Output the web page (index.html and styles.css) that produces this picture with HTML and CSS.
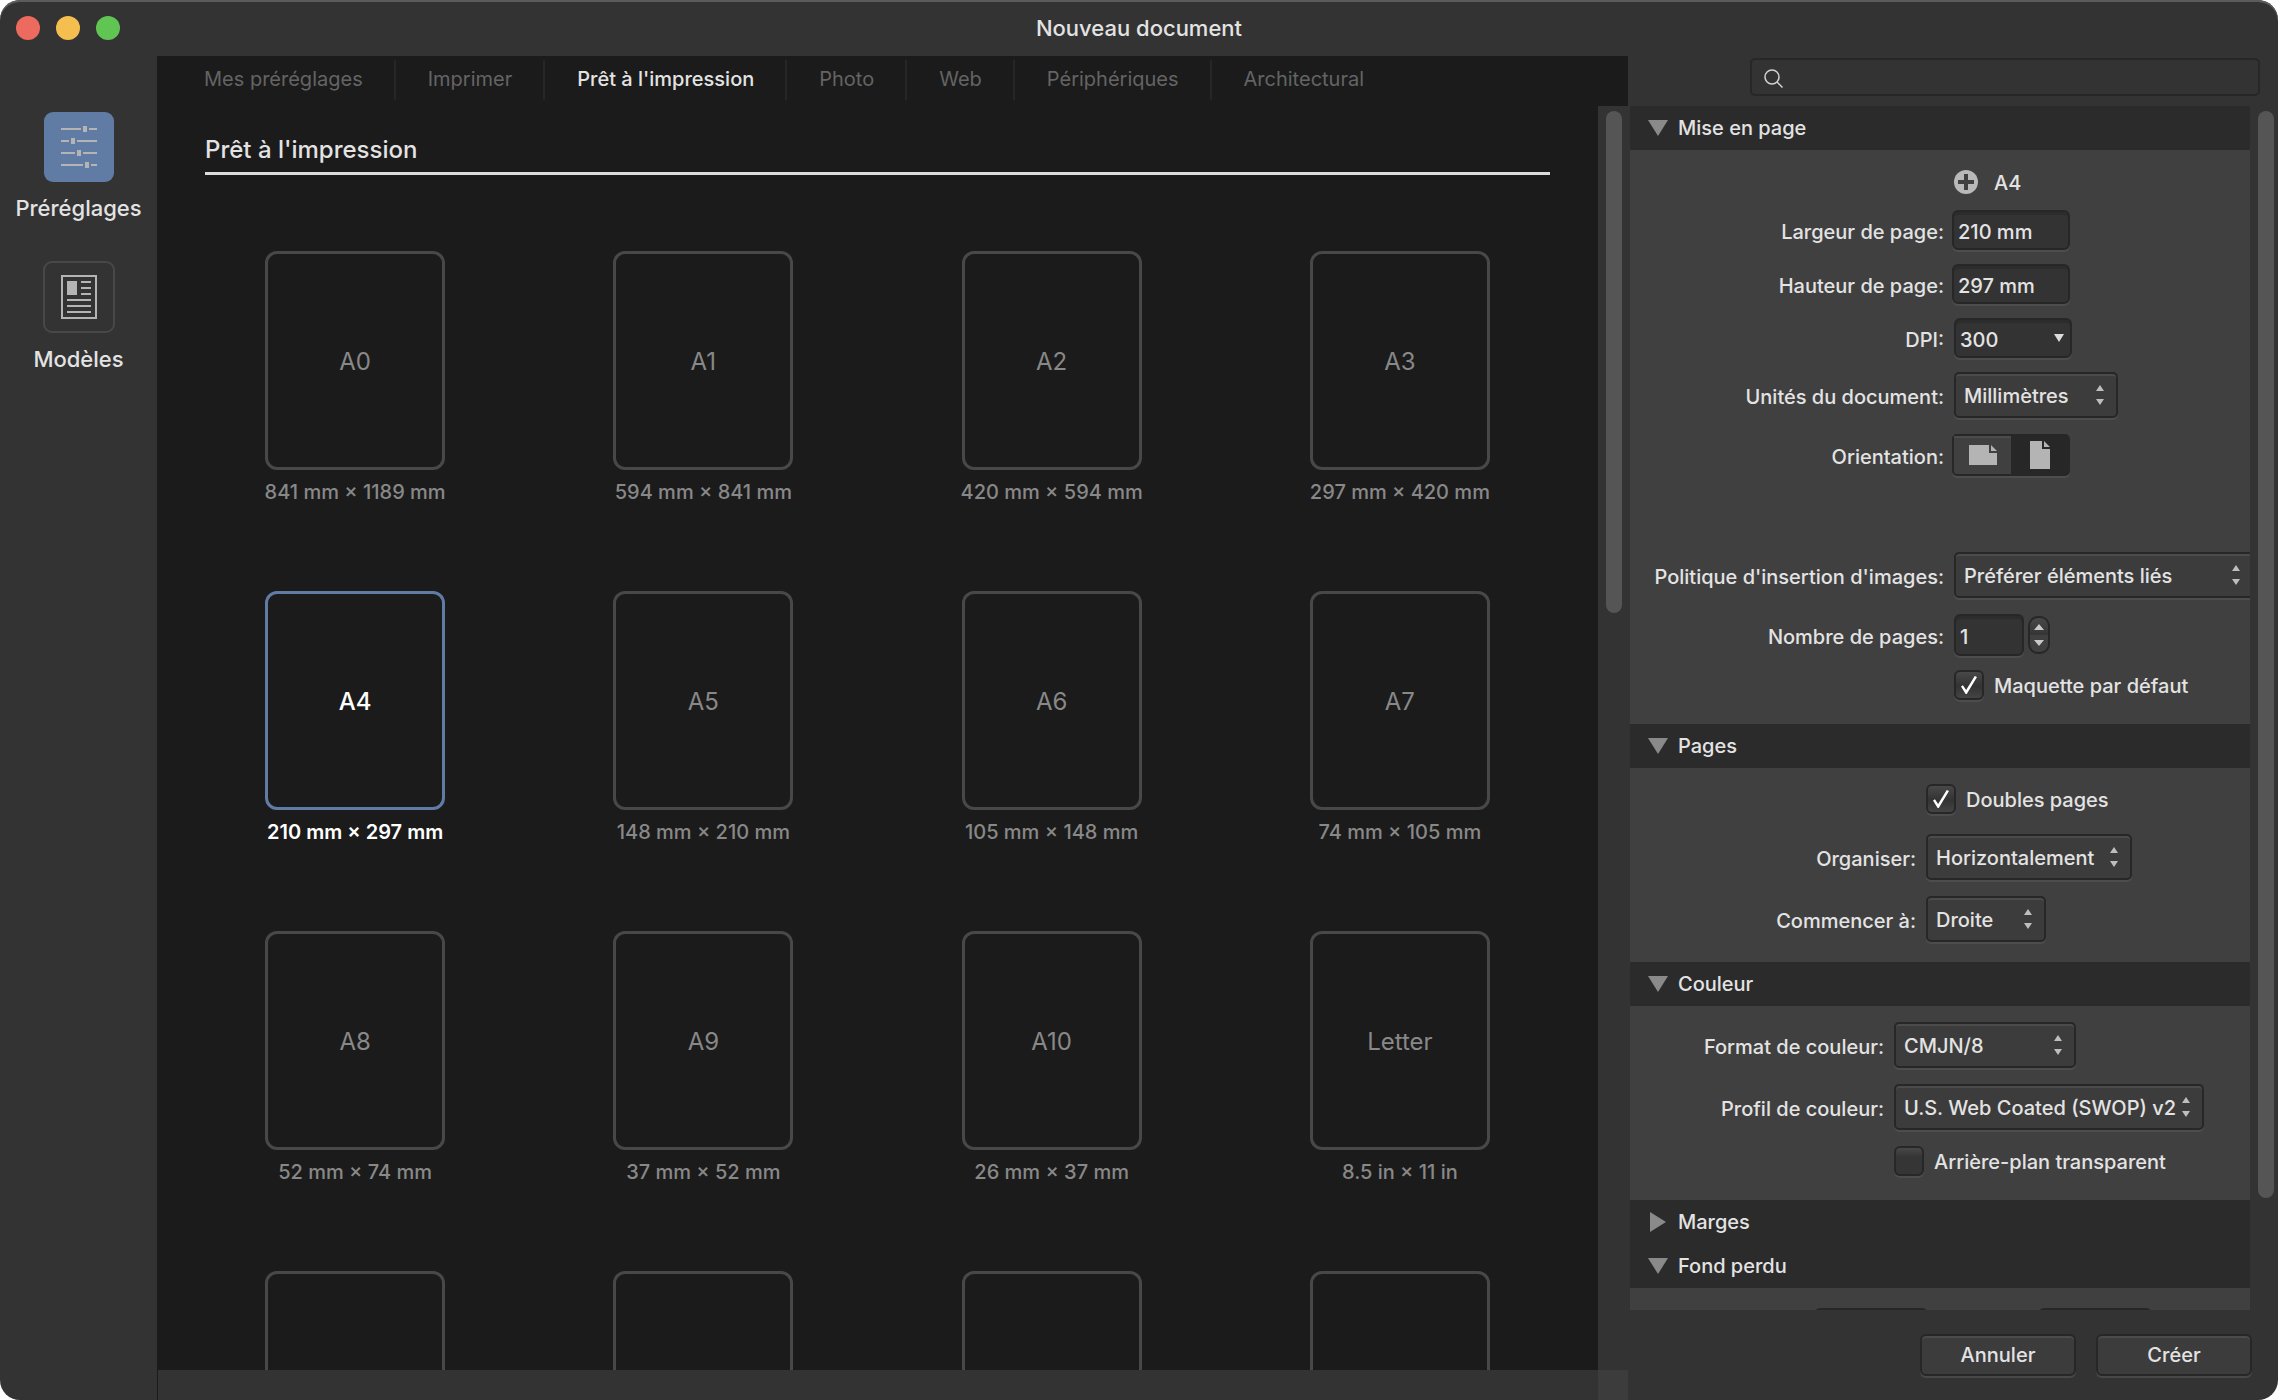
FILE: index.html
```html
<!DOCTYPE html>
<html lang="fr">
<head>
<meta charset="utf-8">
<meta name="viewport" content="width=device-width, initial-scale=1">
<title>Nouveau document</title>
<link rel="stylesheet" href="styles.css">
</head>
<body>
<svg class="defs" aria-hidden="true">
  <symbol id="updown" viewBox="0 0 8 20"><path d="M4 0 8 6H0ZM4 20 8 14H0Z"/></symbol>
  <symbol id="open" viewBox="0 0 20 16"><path d="M0 0H20L10 16Z"/></symbol>
  <symbol id="closed" viewBox="0 0 16 20"><path d="M0 0V20L16 10Z"/></symbol>
</svg>
<div class="window">
  <header class="titlebar">
    <div class="lights">
      <button class="light light-close" aria-label="Fermer"></button>
      <button class="light light-min" aria-label="Réduire"></button>
      <button class="light light-zoom" aria-label="Agrandir"></button>
    </div>
    <h1 class="title">Nouveau document</h1>
  </header>
  <div class="content">
    <nav class="side">
      <button class="side-item">
        <span class="side-icon side-icon-active">
          <svg width="36" height="42" viewBox="0 0 36 42" fill="#b4b4b4"><path d="M0 2h20v2H0zM22 0h4v6h-4zM28 2h8v2h-8zM0 14h8v2H0zM10 12h4v6h-4zM16 14h20v2H16zM0 26h14v2H0zM16 24h4v6h-4zM22 26h14v2H22zM0 38h22v2H0zM24 36h4v6h-4zM30 38h6v2h-6z"/></svg>
        </span>
        <span>Préréglages</span>
      </button>
      <button class="side-item">
        <span class="side-icon">
          <svg width="36" height="44" viewBox="0 0 36 44" fill="#b4b4b4"><path fill-rule="evenodd" d="M0 0h36v44H0zM2 2v40h32V2z"/><path d="M6 6h10v14H6zM20 6h10v2H20zM20 12h10v2H20zM20 18h10v2H20zM6 24h24v2H6zM6 30h24v2H6zM6 36h24v2H6z"/></svg>
        </span>
        <span>Modèles</span>
      </button>
    </nav>
    <main class="main">
      <div class="tabs" role="tablist">
        <button class="tab" role="tab">Mes préréglages</button>
        <button class="tab" role="tab">Imprimer</button>
        <button class="tab tab-active" role="tab" aria-selected="true">Prêt à l'impression</button>
        <button class="tab" role="tab">Photo</button>
        <button class="tab" role="tab">Web</button>
        <button class="tab" role="tab">Périphériques</button>
        <button class="tab" role="tab">Architectural</button>
      </div>
      <div class="browser">
        <div class="list">
          <h2 class="list-title">Prêt à l'impression</h2>
          <div class="grid">
            <button class="preset"><span class="sheet">A0</span><span>841 mm × 1189 mm</span></button>
            <button class="preset"><span class="sheet">A1</span><span>594 mm × 841 mm</span></button>
            <button class="preset"><span class="sheet">A2</span><span>420 mm × 594 mm</span></button>
            <button class="preset"><span class="sheet">A3</span><span>297 mm × 420 mm</span></button>
            <button class="preset preset-active"><span class="sheet">A4</span><span>210 mm × 297 mm</span></button>
            <button class="preset"><span class="sheet">A5</span><span>148 mm × 210 mm</span></button>
            <button class="preset"><span class="sheet">A6</span><span>105 mm × 148 mm</span></button>
            <button class="preset"><span class="sheet">A7</span><span>74 mm × 105 mm</span></button>
            <button class="preset"><span class="sheet">A8</span><span>52 mm × 74 mm</span></button>
            <button class="preset"><span class="sheet">A9</span><span>37 mm × 52 mm</span></button>
            <button class="preset"><span class="sheet">A10</span><span>26 mm × 37 mm</span></button>
            <button class="preset"><span class="sheet">Letter</span><span>8.5 in × 11 in</span></button>
            <button class="preset" aria-label="Préréglage 13"><span class="sheet"></span></button>
            <button class="preset" aria-label="Préréglage 14"><span class="sheet"></span></button>
            <button class="preset" aria-label="Préréglage 15"><span class="sheet"></span></button>
            <button class="preset" aria-label="Préréglage 16"><span class="sheet"></span></button>
          </div>
        </div>
        <div class="track"><div class="thumb thumb-list"></div></div>
      </div>
      <div class="hbar"><div class="corner"></div></div>
    </main>
    <aside class="panel">
      <div class="search">
        <svg width="19" height="19" viewBox="0 0 19 19" fill="none" stroke="#d2d2d2" stroke-width="1.5"><circle cx="8" cy="8" r="7"/><path d="M13 13 18.500 18.500"/></svg>
        <input class="search-input" type="search" aria-label="Rechercher">
      </div>
      <div class="settings">
        <form class="sections" id="settings">
          <section>
            <h3 class="head"><svg class="tri" width="20" height="16"><use href="#open"/></svg>Mise en page</h3>
            <div class="body body-layout">
              <div class="row row-name">
                <span></span>
                <span class="check">
                  <button type="button" class="add" aria-label="Ajouter un préréglage"><svg width="24" height="24" viewBox="0 0 24 24"><circle cx="12" cy="12" r="12" fill="#b9b9b9"/><path d="M12 4v16M4 12h16" stroke="#404040" stroke-width="4"/></svg></button>
                  <span>A4</span>
                </span>
              </div>
              <div class="row row-near"><label for="w">Largeur de page:</label><input class="field" id="w" value="210 mm"></div>
              <div class="row row-near"><label for="h">Hauteur de page:</label><input class="field" id="h" value="297 mm"></div>
              <div class="row"><label for="dpi">DPI:</label><span class="pick"><select class="field" id="dpi"><option>300</option></select><svg class="drop" width="10" height="8" viewBox="0 0 10 8"><path d="M0 0H10L5 8Z"/></svg></span></div>
              <div class="row row-wide"><label for="unit">Unités du document:</label><span class="pick"><select class="select w-unit" id="unit"><option>Millimètres</option></select><svg class="arrows" width="8" height="20"><use href="#updown"/></svg></span></div>
              <div class="row row-near row-orient"><span id="orient">Orientation:</span>
                <span class="segments" role="group" aria-labelledby="orient">
                  <button type="button" class="segment" aria-label="Paysage"><svg width="28" height="20" viewBox="0 0 28 20" fill="#b4b4b4"><path d="M0 0H20V8H28V20H0ZM22 0 28 6H22Z"/></svg></button>
                  <button type="button" class="segment segment-on" aria-label="Portrait" aria-pressed="true"><svg width="20" height="28" viewBox="0 0 20 28" fill="#b4b4b4"><path d="M0 0H12V8H20V28H0ZM14 0 20 6H14Z"/></svg></button>
                </span>
              </div>
              <div class="row row-wide"><label for="policy">Politique d'insertion d'images:</label><span class="pick"><select class="select w-policy" id="policy"><option>Préférer éléments liés</option></select><svg class="arrows" width="8" height="20"><use href="#updown"/></svg></span></div>
              <div class="row"><label for="count">Nombre de pages:</label>
                <span class="count"><input class="field field-count" id="count" value="1"><button type="button" class="stepper" aria-label="Modifier le nombre de pages"><svg width="10" height="22" viewBox="0 0 10 22" fill="#c8c8c8"><path d="M5 0 10 6H0ZM5 22 10 16H0Z"/></svg></button></span>
              </div>
              <div class="row"><span></span><label class="check"><input class="box" type="checkbox" checked><span>Maquette par défaut</span></label></div>
            </div>
          </section>
          <section>
            <h3 class="head"><svg class="tri" width="20" height="16"><use href="#open"/></svg>Pages</h3>
            <div class="body body-pages">
              <div class="row row-spread"><span></span><label class="check"><input class="box" type="checkbox" checked><span>Doubles pages</span></label></div>
              <div class="row row-wide"><label for="arrange">Organiser:</label><span class="pick"><select class="select w-arrange" id="arrange"><option>Horizontalement</option></select><svg class="arrows" width="8" height="20"><use href="#updown"/></svg></span></div>
              <div class="row row-wide"><label for="start">Commencer à:</label><span class="pick"><select class="select w-start" id="start"><option>Droite</option></select><svg class="arrows" width="8" height="20"><use href="#updown"/></svg></span></div>
            </div>
          </section>
          <section>
            <h3 class="head"><svg class="tri" width="20" height="16"><use href="#open"/></svg>Couleur</h3>
            <div class="body body-color">
              <div class="row row-wide"><label for="format">Format de couleur:</label><span class="pick"><select class="select w-format" id="format"><option>CMJN/8</option></select><svg class="arrows" width="8" height="20"><use href="#updown"/></svg></span></div>
              <div class="row row-wide"><label for="profile">Profil de couleur:</label><span class="pick"><select class="select w-profile" id="profile"><option>U.S. Web Coated (SWOP) v2</option></select><svg class="arrows" width="8" height="20"><use href="#updown"/></svg></span></div>
              <div class="row"><span></span><label class="check"><input class="box" type="checkbox"><span>Arrière-plan transparent</span></label></div>
            </div>
          </section>
          <section>
            <h3 class="head"><svg class="tri" width="16" height="20"><use href="#closed"/></svg>Marges</h3>
          </section>
          <section>
            <h3 class="head"><svg class="tri" width="20" height="16"><use href="#open"/></svg>Fond perdu</h3>
            <div class="body body-bleed">
              <input class="field" aria-label="Fond perdu gauche">
              <input class="field" aria-label="Fond perdu droite">
            </div>
          </section>
        </form>
        <div class="track track-panel"><div class="thumb thumb-panel"></div></div>
      </div>
      <footer class="actions">
        <button class="action">Annuler</button>
        <button class="action">Créer</button>
      </footer>
    </aside>
  </div>
</div>
</body>
</html>
```
FILE: styles.css
```css
* { box-sizing: border-box; }

body {
  margin: 0;
  background: #fff;
  color: #e3e3e3;
  font: 400 20px/24px Inter, "Liberation Sans", sans-serif;
}

button, input, select {
  margin: 0;
  padding: 0;
  border: 0;
  background: none;
  color: inherit;
  font: inherit;
}

h1, h2, h3 { margin: 0; font: inherit; }

svg { flex: none; }

.defs { display: none; }

.window {
  display: flex;
  flex-direction: column;
  height: 100vh;
  overflow: hidden;
  border-radius: 20px;
  background: #333;
  box-shadow: inset 0 2px #5c5c5c;
}

/* title bar */
.titlebar {
  display: grid;
  grid-template-columns: 1fr auto 1fr;
  align-items: center;
  flex: none;
  height: 56px;
  padding: 0 16px;
}
.lights { display: flex; gap: 16px; }
.light { width: 24px; height: 24px; border-radius: 50%; }
.light-close { background: #ec6a5e; }
.light-min { background: #f4bf4f; }
.light-zoom { background: #61c554; }
.title { font-size: 22px; font-weight: 500; }

.content { display: flex; flex: 1; min-height: 0; }

/* left navigation */
.side {
  display: flex;
  flex-direction: column;
  gap: 39px;
  flex: none;
  width: 157px;
  padding-top: 56px;
}
.side-item {
  display: flex;
  flex-direction: column;
  align-items: center;
  gap: 12px;
  font-size: 22px;
  line-height: 28px;
  font-weight: 500;
}
.side-icon {
  display: grid;
  place-items: center;
  width: 72px;
  height: 72px;
  border: 2px solid #484848;
  border-radius: 9px;
}
.side-icon-active { width: 70px; height: 70px; border: 0; background: #617ca4; }

/* preset browser */
.main {
  display: flex;
  flex-direction: column;
  flex: 1;
  min-width: 0;
  background: #1b1b1b;
}
.tabs { display: flex; flex: none; height: 50px; padding: 4px 0 6px 15px; }
.tab {
  padding: 0 31px 2px 32px;
  border-right: 2px solid #262626;
  color: #646464;
  white-space: nowrap;
}
.tab:last-child { border-right: 0; }
.tab-active { color: #e3e3e3; font-weight: 500; }

.browser { display: flex; flex: 1; min-height: 0; }
.list { flex: 1; min-width: 0; overflow: hidden; }
.list-title {
  margin: 0 48px;
  padding: 29px 0 7px;
  border-bottom: 3px solid #dcdcdc;
  font-size: 24px;
  line-height: 30px;
  font-weight: 500;
}
.grid {
  display: grid;
  grid-template-columns: repeat(4, 1fr);
  grid-auto-rows: 340px;
  padding: 76px 24px 0;
}
.preset {
  display: flex;
  flex-direction: column;
  align-items: center;
  gap: 10px;
  color: #888;
  font-weight: 500;
}
.sheet {
  display: grid;
  place-items: center;
  width: 180px;
  height: 219px;
  padding-top: 2px;
  border: 3px solid #484848;
  border-radius: 12px;
  font-size: 24px;
  font-weight: 400;
}
.preset-active { color: #fff; font-weight: 600; }
.preset-active .sheet { border-color: #617ca4; font-weight: 500; }

.track { flex: none; width: 30px; padding: 5px 6px 5px 8px; background: #333; }
.thumb { width: 16px; border-radius: 8px; background: #555; }
.thumb-list { height: 40%; }
.hbar {
  display: flex;
  justify-content: flex-end;
  flex: none;
  height: 30px;
  margin-left: 1px;
  background: #333;
}
.corner { width: 30px; background: #3c3c3c; }

/* settings panel */
.panel { display: flex; flex-direction: column; flex: none; width: 650px; }
.search {
  display: flex;
  align-items: center;
  gap: 12px;
  flex: none;
  height: 38px;
  margin: 2px 18px 10px 122px;
  padding: 2px 12px 0;
  border: 2px solid #272727;
  border-radius: 5px;
}
.search-input { flex: 1; min-width: 0; outline: 0; }
.settings { display: flex; flex: 1; min-height: 0; padding-left: 2px; }
.sections { flex: 1; min-width: 0; overflow: hidden; font-weight: 500; }
.track-panel { width: 28px; }
.thumb-panel { height: 91%; }

.head {
  display: flex;
  align-items: center;
  gap: 10px;
  height: 44px;
  padding-left: 18px;
  background: #2b2b2b;
  font-weight: 500;
}
.tri { box-sizing: content-box; fill: #8a8a8a; }
.tri[width="16"] { padding: 0 2px; }

.body { padding: 16px 0 24px; background: #404040; }
.row {
  display: grid;
  grid-template-columns: 314px auto;
  justify-content: start;
  align-items: center;
  column-gap: 10px;
  margin-bottom: 14px;
  white-space: nowrap;
}
.row > :first-child { padding-top: 3px; text-align: right; }
.row:last-child { margin-bottom: 0; }
.row-near { column-gap: 8px; }
.row-name { height: 32px; margin-bottom: 12px; }
.row-wide { margin-bottom: 16px; }
.row-orient { margin-bottom: 76px; }
.row-spread { margin-bottom: 20px; }
.body-pages { padding-bottom: 20px; }
.body-pages .row { grid-template-columns: 286px auto; }
.body-color .row { grid-template-columns: 254px auto; }
.body-bleed { display: flex; gap: 110px; padding: 20px 0 0 184px; }

.check { display: flex; align-items: center; gap: 10px; }
.check > span { padding-top: 2px; }
.add { display: grid; place-items: center; width: 30px; height: 24px; padding-right: 6px; }
.box {
  display: grid;
  place-items: center;
  appearance: none;
  width: 30px;
  height: 30px;
  border: 2px solid #272727;
  border-radius: 6px;
  background: linear-gradient(#484848, #353535 35%);
  box-shadow: 0 2px #4d4d4d;
}
.box:checked { background: linear-gradient(#484848, #333 55%, #444); }
.box:checked::before {
  content: "";
  width: 16px;
  height: 18px;
  background: #fff;
  clip-path: polygon(0 59%, 12% 52%, 32% 78%, 86% 0, 100% 5%, 36% 100%, 29% 100%);
}

.field {
  width: 118px;
  height: 40px;
  padding: 4px 4px 0;
  border: 2px solid #272727;
  border-radius: 6px;
  background: #333;
  box-shadow: inset 0 3px #2c2c2c, 0 2px #4d4d4d;
  appearance: none;
}
.field-count { width: 70px; height: 42px; }
.body-bleed .field { width: 114px; }
.count { display: flex; align-items: center; gap: 4px; }
.stepper {
  display: grid;
  place-items: center;
  width: 22px;
  height: 38px;
  border: 2px solid #272727;
  border-radius: 10px;
  background: linear-gradient(#484848, #353535 50%, #404040 50%);
}

.pick { display: grid; align-items: center; }
.pick > * { grid-area: 1 / 1; }
.pick > svg { justify-self: end; pointer-events: none; }
.drop { margin-right: 8px; fill: #dcdcdc; }
.arrows { margin-right: 14px; fill: #bebebe; }
.select {
  height: 46px;
  padding: 1px 8px 0;
  border: 2px solid #272727;
  border-radius: 5px;
  background: #3c3c3c;
  box-shadow: inset 0 2px #4b4b4b, 0 2px #4d4d4d;
  appearance: none;
}
.w-unit { width: 164px; }
.w-policy { width: 300px; }
.w-arrange { width: 206px; }
.w-start { width: 120px; }
.w-format { width: 182px; }
.w-profile { width: 310px; }

.segments {
  display: flex;
  width: 118px;
  height: 42px;
  border: 2px solid #272727;
  border-radius: 5px;
  background: #404040;
  box-shadow: 0 2px #4d4d4d;
}
.segment { display: grid; place-items: center; flex: 1; box-shadow: inset 0 2px #4b4b4b; }
.segment-on { background: #272727; box-shadow: none; }

.actions {
  display: flex;
  justify-content: flex-end;
  align-items: flex-start;
  gap: 20px;
  flex: none;
  height: 90px;
  padding: 24px 26px 0 0;
}
.action {
  width: 156px;
  height: 42px;
  border: 2px solid #272727;
  border-radius: 6px;
  background: #3c3c3c;
  box-shadow: inset 0 2px #4b4b4b, 0 2px #484848;
  font-weight: 500;
}
```
